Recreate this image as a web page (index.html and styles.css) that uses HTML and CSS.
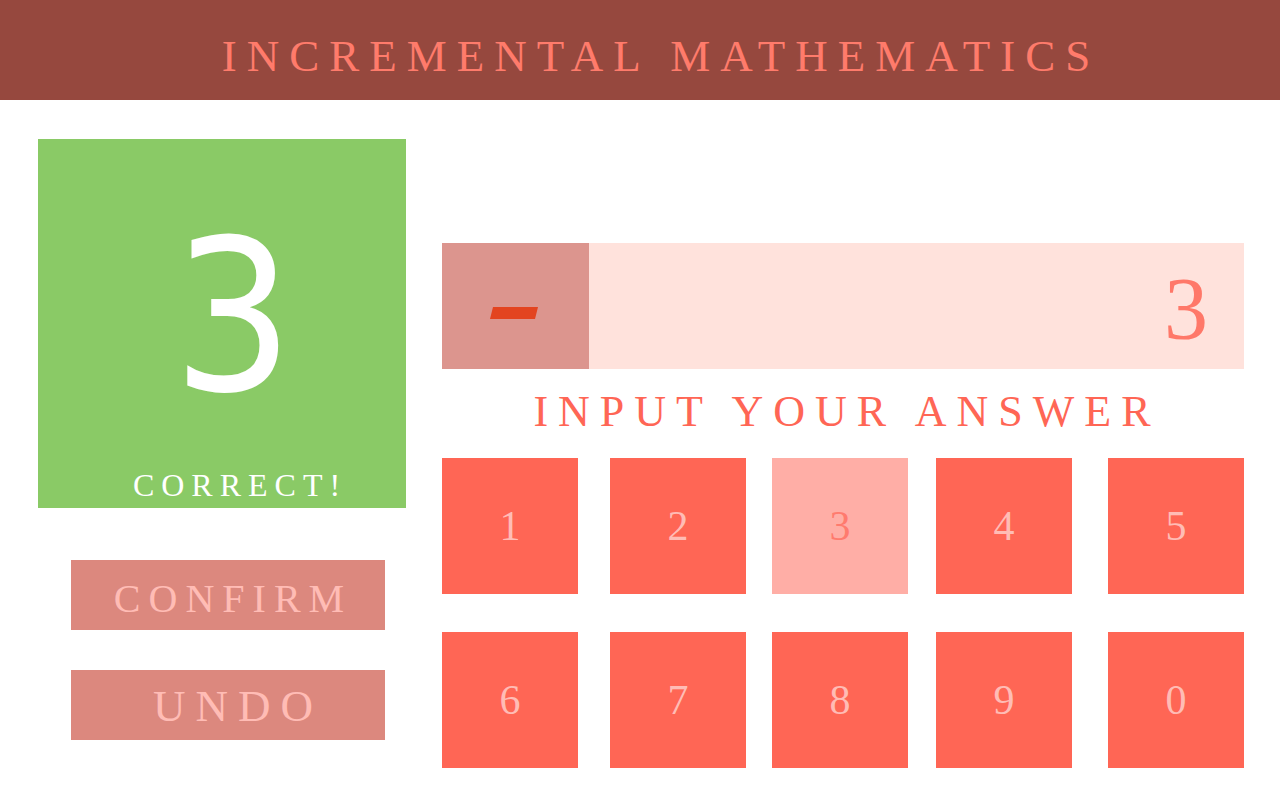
FILE: index.html
```html
<!DOCTYPE html>
<html lang="en">
<head>
  <meta charset="utf-8">
  <meta name="viewport" content="width=device-width, initial-scale=1">
  <title>Incremental Mathematics</title>
  <link rel="stylesheet" href="styles.css">
</head>
<body>
  <header class="banner">
    <h1 class="banner-title">INCREMENTAL MATHEMATICS</h1>
  </header>
  <main class="game">
    <section class="side">
      <div class="result">
        <div class="result-number">3</div>
        <div class="result-status">CORRECT!</div>
      </div>
      <div class="actions">
        <button class="action action-confirm" type="button">CONFIRM</button>
        <button class="action action-undo" type="button">UNDO</button>
      </div>
    </section>
    <section class="play">
      <div class="entry">
        <div class="operator">
          <svg class="operator-icon" viewBox="0 0 48 12" role="img" aria-label="minus">
            <path d="M3 0H48L45 12H0Z"/>
          </svg>
        </div>
        <input class="answer" id="answer" type="text" value="3" readonly>
      </div>
      <label class="prompt" for="answer">INPUT YOUR ANSWER</label>
      <div class="keypad">
        <button class="key" type="button">1</button>
        <button class="key" type="button">2</button>
        <button class="key key-active" type="button">3</button>
        <button class="key" type="button">4</button>
        <button class="key" type="button">5</button>
        <button class="key" type="button">6</button>
        <button class="key" type="button">7</button>
        <button class="key" type="button">8</button>
        <button class="key" type="button">9</button>
        <button class="key" type="button">0</button>
      </div>
    </section>
  </main>
</body>
</html>
```

FILE: styles.css
```css
* {
  box-sizing: border-box;
}

body {
  margin: 0;
  background: #ffffff;
  font-family: "Liberation Serif", "Times New Roman", serif;
}

button,
input {
  margin: 0;
  padding: 0;
  border: 0;
  border-radius: 0;
  font-family: inherit;
}

button {
  cursor: pointer;
}

.banner {
  padding: 12px 0 0 42px;
  background: #96483e;
  text-align: center;
}

.banner-title {
  margin: 0;
  color: #ff7b6b;
  font-size: 45px;
  font-weight: 400;
  line-height: 88px;
  letter-spacing: 10px;
}

.game {
  display: grid;
  grid-template-columns: 368fr 802fr;
  gap: 36px;
  padding: 39px 36px 32px 38px;
}

.result {
  display: flex;
  flex-direction: column;
  aspect-ratio: 368 / 369;
  background: #8aca66;
  color: #ffffff;
  text-align: center;
}

.result-number {
  display: flex;
  flex: 1;
  align-items: center;
  justify-content: center;
  padding: 34px 0 0 22px;
  font-family: "DejaVu Sans Condensed", "DejaVu Sans", Verdana, sans-serif;
  font-size: 210px;
  line-height: 1;
}

.result-status {
  padding-left: 36px;
  font-size: 32px;
  line-height: 46px;
  letter-spacing: 7px;
}

.actions {
  display: flex;
  flex-direction: column;
  gap: 40px;
  padding: 52px 21px 0 33px;
}

.action {
  height: 70px;
  background: #dc887e;
  color: #ffbcb5;
}

.action-confirm {
  padding: 6px 0 0 10px;
  font-size: 40px;
  letter-spacing: 8px;
}

.action-undo {
  padding: 2px 0 0 20px;
  font-size: 45px;
  letter-spacing: 10px;
}

.play {
  padding-top: 104px;
}

.entry {
  display: grid;
  grid-template-columns: 147fr 655fr;
  height: 126px;
}

.operator {
  display: flex;
  align-items: center;
  justify-content: center;
  padding: 14px 4px 0 0;
  background: #dc958e;
}

.operator-icon {
  width: 48px;
  height: 12px;
  fill: #e34420;
}

.answer {
  width: 100%;
  padding: 4px 36px 0 0;
  background: #ffe2dc;
  color: #ff7869;
  font-size: 88px;
  text-align: right;
}

.prompt {
  display: block;
  padding: 0 0 3px 8px;
  color: #ff6655;
  font-size: 44px;
  line-height: 86px;
  letter-spacing: 10px;
  text-align: center;
}

/* Keys sit in the odd tracks; the even tracks are the spaces between them. */
.keypad {
  display: grid;
  grid-template-columns: 136fr 32fr 136fr 26fr 136fr 28fr 136fr 36fr 136fr;
  row-gap: 38px;
}

.key {
  aspect-ratio: 1;
  background: #ff6655;
  color: #ffbcb5;
  font-size: 42px;
}

.key:nth-child(5n + 1) {
  grid-column: 1;
}

.key:nth-child(5n + 2) {
  grid-column: 3;
}

.key:nth-child(5n + 3) {
  grid-column: 5;
}

.key:nth-child(5n + 4) {
  grid-column: 7;
}

.key:nth-child(5n) {
  grid-column: 9;
}

.key-active {
  background: #ffaea6;
  color: #ff7b6e;
}
```
